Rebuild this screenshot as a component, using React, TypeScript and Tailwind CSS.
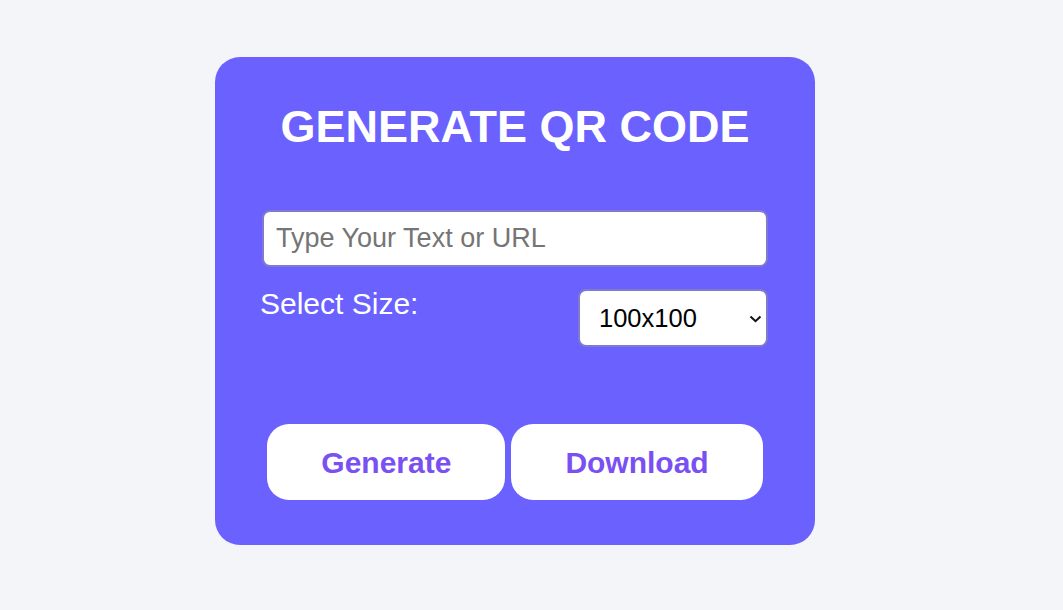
import { useState } from "react";

const sizes = ["100x100", "200x200", "300x300", "400x400", "500x500"];

export default function App() {
    const [text, setText] = useState("");
    const [size, setSize] = useState(sizes[0]);

    return (
        <div className="min-h-[610px] w-full bg-[#f4f5f9] pt-[57px] pl-[215px] font-['Liberation_Sans',Arial,sans-serif]">
            <div className="w-[600px] h-[488px] rounded-[25px] bg-[#6a61ff] pt-[44px] px-[47px]">
                <h1 className="text-center text-white font-bold text-[45px] leading-[52px]">
                    GENERATE QR CODE
                </h1>

                <input
                    type="text"
                    value={text}
                    onChange={(e) => setText(e.target.value)}
                    placeholder="Type Your Text or URL"
                    className="mt-[57px] block w-full h-[57px] rounded-[8px] border-2 border-[#7f7ad0] bg-white pl-[12px] text-[27px] text-black placeholder:text-[#757575] outline-none"
                />

                <div className="mt-[20px] flex items-start justify-between">
                    <label className="text-white text-[30px] leading-[33px] -ml-[2px]">Select Size:</label>
                    <div className="relative mt-[2px]">
                        <select
                            value={size}
                            onChange={(e) => setSize(e.target.value)}
                            className="appearance-none block w-[190px] h-[58px] rounded-[8px] border-2 border-[#7f7ad0] bg-white pl-[19px] text-[25.5px] text-black outline-none"
                        >
                            {sizes.map((s) => (
                                <option key={s} value={s}>{s}</option>
                            ))}
                        </select>
                        <svg
                            className="pointer-events-none absolute right-[6px] top-[26px]"
                            width="13"
                            height="8"
                            viewBox="0 0 13 8"
                            fill="none"
                        >
                            <path d="M1.5 1.5 L6.5 6.2 L11.5 1.5" stroke="#111" strokeWidth="2" />
                        </svg>
                    </div>
                </div>

                <div className="mt-[77px] flex justify-center gap-[6px]">
                    <button className="h-[76px] rounded-[22px] bg-white px-[54px] text-[30px] font-bold text-[#7950f2]">
                        Generate
                    </button>
                    <button className="h-[76px] rounded-[22px] bg-white px-[54px] text-[30px] font-bold text-[#7950f2]">
                        Download
                    </button>
                </div>
            </div>
        </div>
    );
}
